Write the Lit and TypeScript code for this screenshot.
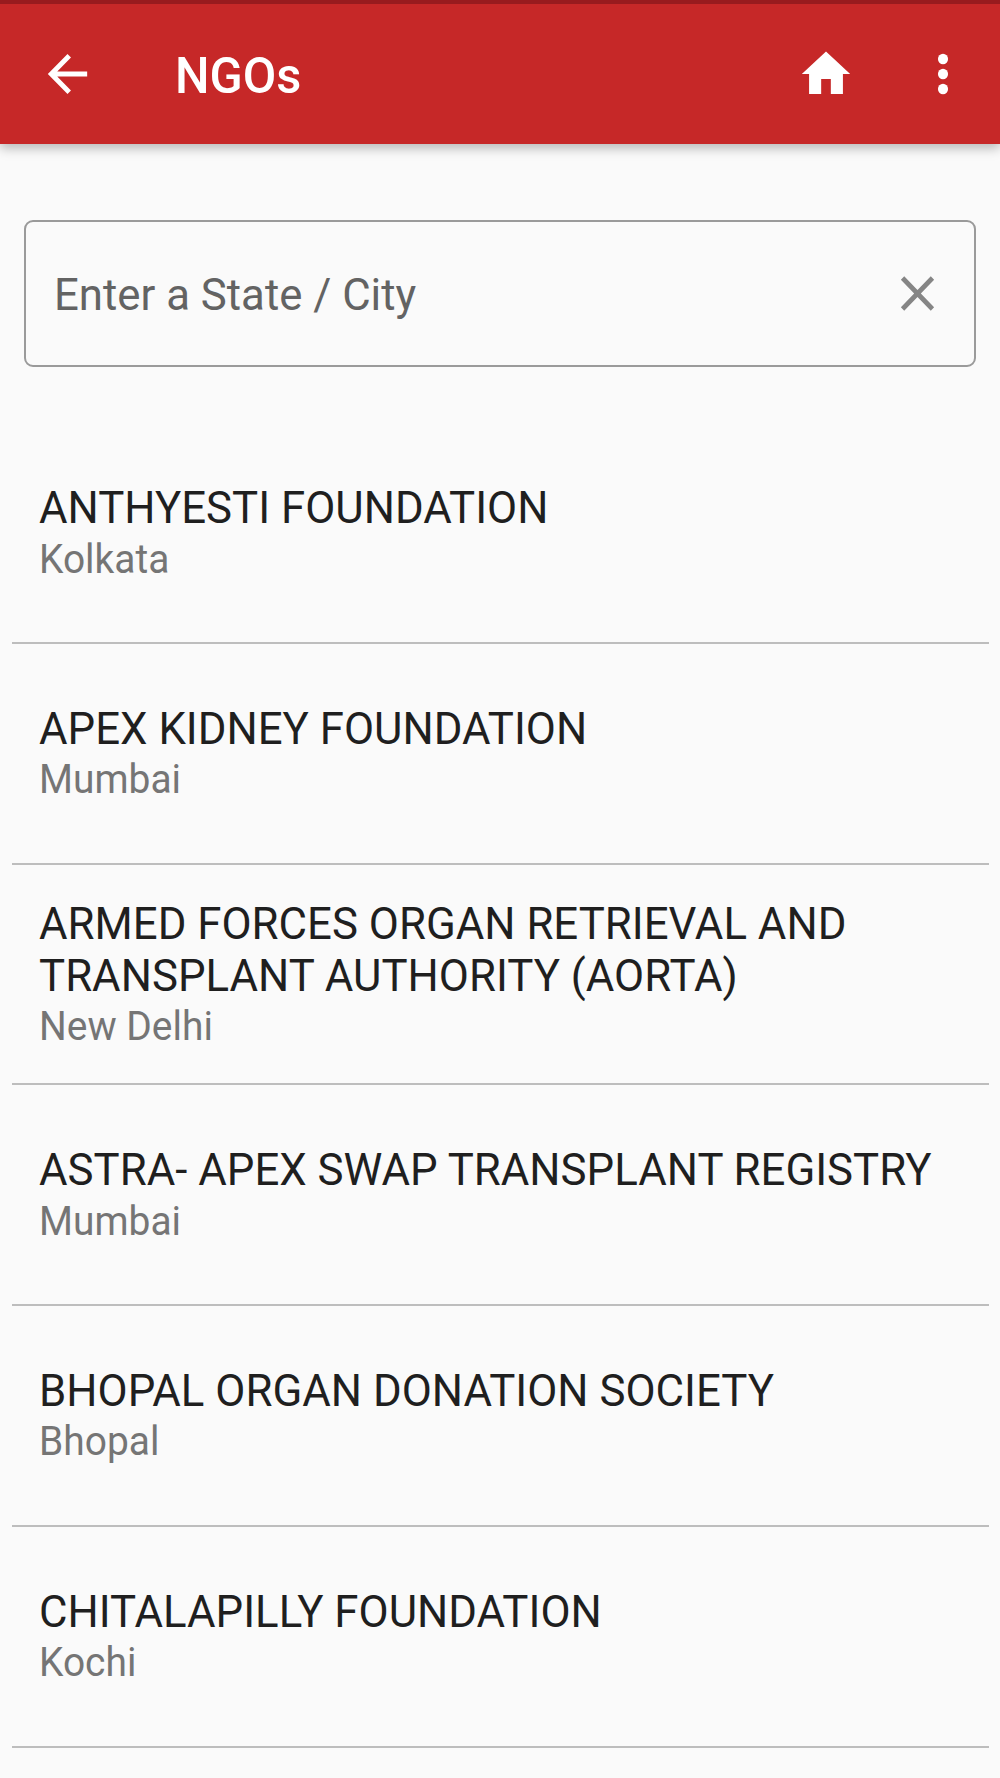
import { LitElement, html, css } from "lit";
import { customElement, property } from "lit/decorators.js";

interface Ngo {
  name: string;
  city: string;
}

const NGOS: Ngo[] = [
  { name: "ANTHYESTI FOUNDATION", city: "Kolkata" },
  { name: "APEX KIDNEY FOUNDATION", city: "Mumbai" },
  { name: "ARMED FORCES ORGAN RETRIEVAL AND TRANSPLANT AUTHORITY (AORTA)", city: "New Delhi" },
  { name: "ASTRA- APEX SWAP TRANSPLANT REGISTRY", city: "Mumbai" },
  { name: "BHOPAL ORGAN DONATION SOCIETY", city: "Bhopal" },
  { name: "CHITALAPILLY FOUNDATION", city: "Kochi" },
];

@customElement("app-toolbar")
export class AppToolbar extends LitElement {
  @property() heading = "";

  static styles = css`
    :host {
      display: flex;
      align-items: center;
      box-sizing: border-box;
      height: 144px;
      padding: 0 28.2px 0 38.3px;
      border-top: 4px solid #981b1e;
      background: #c62828;
      color: #fff;
      box-shadow: 0 4px 11px rgba(0, 0, 0, 0.28);
    }
    .icon {
      display: block;
      flex: none;
      height: 60px;
      fill: currentColor;
    }
    .back {
      width: 59px;
    }
    .home,
    .more {
      width: 58px;
    }
    .home {
      margin-right: 58.8px;
    }
    .heading {
      flex: 1;
      margin: 3px 0 0 78px;
      font-size: 50px;
      font-weight: 500;
      line-height: 60px;
      transform: scaleX(0.974);
      transform-origin: left;
    }
  `;

  render() {
    return html`
      <svg class="icon back" viewBox="0 0 24 24" preserveAspectRatio="none">
        <path d="M20 11H7.83l5.59-5.59L12 4l-8 8 8 8 1.41-1.41L7.83 13H20v-2z" />
      </svg>
      <div class="heading">${this.heading}</div>
      <svg class="icon home" viewBox="0 0 24 24" preserveAspectRatio="none">
        <path d="M10 20v-6h4v6h5v-8h3L12 3 2 12h3v8z" />
      </svg>
      <svg class="icon more" viewBox="0 0 24 24" preserveAspectRatio="none">
        <circle cx="12" cy="6" r="2.1" />
        <circle cx="12" cy="12" r="2.1" />
        <circle cx="12" cy="18" r="2.1" />
      </svg>
    `;
  }
}

@customElement("search-field")
export class SearchField extends LitElement {
  @property() placeholder = "";

  static styles = css`
    :host {
      display: flex;
      align-items: center;
      box-sizing: border-box;
      height: 147.4px;
      padding: 0 28px;
      border: 2px solid #9a9a9a;
      border-radius: 9px;
    }
    .placeholder {
      flex: 1;
      margin-top: 2px;
      font-size: 45px;
      line-height: 53px;
      color: #636363;
      transform: scaleX(0.972);
      transform-origin: left;
    }
    .clear {
      display: block;
      flex: none;
      width: 57px;
      height: 59px;
      fill: #858585;
    }
  `;

  render() {
    return html`
      <div class="placeholder">${this.placeholder}</div>
      <svg class="clear" viewBox="0 0 24 24" preserveAspectRatio="none">
        <path
          d="M19 6.41 17.59 5 12 10.59 6.41 5 5 6.41 10.59 12 5 17.59 6.41 19 12 13.41 17.59 19 19 17.59 13.41 12z"
        />
      </svg>
    `;
  }
}

@customElement("ngo-row")
export class NgoRow extends LitElement {
  @property() name = "";
  @property() city = "";

  static styles = css`
    :host {
      display: flex;
      flex-direction: column;
      justify-content: center;
      box-sizing: border-box;
      height: 220.7px;
      padding-left: 26.8px;
      border-bottom: 2px solid #bdbdbd;
    }
    .name,
    .city {
      width: 940px;
      transform: scaleX(0.973);
      transform-origin: left;
    }
    .name {
      font-size: 45px;
      line-height: 52.3px;
      color: #1f1f1f;
    }
    .city {
      padding-top: 1px;
      font-size: 40px;
      line-height: 47.5px;
      color: #757575;
    }
  `;

  render() {
    return html`
      <div class="name">${this.name}</div>
      <div class="city">${this.city}</div>
    `;
  }
}

@customElement("app-root")
export class AppRoot extends LitElement {
  static styles = css`
    :host {
      display: flex;
      flex-direction: column;
      height: 1778px;
      overflow: hidden;
      background: #fafafa;
      font-family: Roboto, sans-serif;
    }
    .toolbar,
    .search,
    .list {
      flex: none;
    }
    .search {
      margin: 76px 24px 0;
    }
    .list {
      padding: 56px 11.5px 0 12px;
    }
  `;

  render() {
    return html`
      <app-toolbar class="toolbar" .heading=${"NGOs"}></app-toolbar>
      <search-field class="search" .placeholder=${"Enter a State / City"}></search-field>
      <div class="list">
        ${NGOS.map((ngo) => html`<ngo-row .name=${ngo.name} .city=${ngo.city}></ngo-row>`)}
      </div>
    `;
  }
}
